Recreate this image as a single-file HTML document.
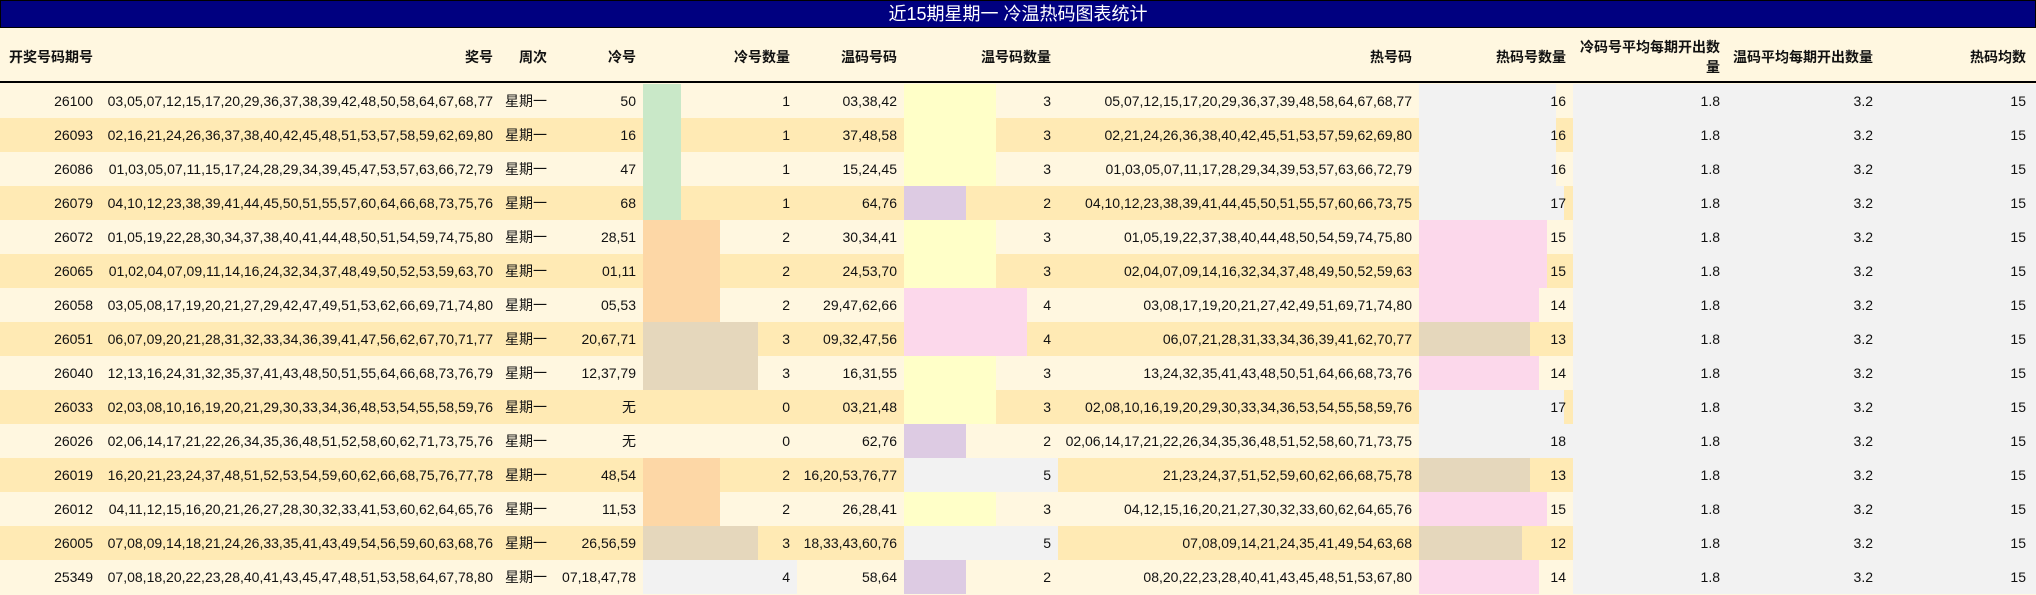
<!DOCTYPE html>
<html><head><meta charset="utf-8">
<style>
*{margin:0;padding:0;box-sizing:border-box}
body{width:2036px;height:595px;overflow:hidden;background:#fff7e0;font-family:"Liberation Sans","Noto Sans CJK SC",sans-serif;font-size:14px;color:#111}
.title{position:absolute;left:0;top:0;width:2036px;height:28px;background:#000080;border:1px solid #000;color:#fff;text-align:center;font-size:18px;line-height:26px}
.hdr{position:absolute;left:0;top:28px;width:2036px;height:55px;background:#fff7e0;border-bottom:2px solid #000;display:flex;font-weight:bold;font-size:14px}
.hdr div{height:53px;display:flex;align-items:center;justify-content:flex-end;text-align:right;padding-right:7px;padding-top:5px;line-height:20px}
.r{position:absolute;left:0;width:2036px;height:34px;display:flex}
.r.o{background:#fff7e0}.r.e{background:#ffeab4}
.r>div{height:34px;line-height:34px;text-align:right;padding-right:7px;position:relative;white-space:nowrap}
.r>div span{position:relative}
.g{background:#f2f2f2}
.b{position:absolute;left:0;top:0;height:34px}
.c1{width:100px}.c2{width:400px}.c3{width:54px}.c4{width:89px}.c5{width:154px}.c6{width:107px}.c7{width:154px}.c8{width:361px}.c9{width:154px}.c10{width:154px}.c11{width:153px}.c12{width:156px;padding-right:10px!important}
.gr{background:#c9e8c8}.or{background:#fdd7a6}.tn{background:#e5d7bc}.gy{background:#f2f2f2}.ye{background:#ffffc8}.lv{background:#ddcbe3}.pk{background:#fcd8eb}
</style></head><body>
<div class="title">近15期星期一 冷温热码图表统计</div>
<div class="hdr">
<div class="c1" style="justify-content:flex-start;padding-left:9px">开奖号码期号</div>
<div class="c2">奖号</div><div class="c3">周次</div><div class="c4">冷号</div><div class="c5">冷号数量</div><div class="c6">温码号码</div><div class="c7">温号码数量</div><div class="c8">热号码</div><div class="c9">热码号数量</div><div class="c10">冷码号平均每期开出数<br>量</div><div class="c11">温码平均每期开出数量</div><div class="c12">热码均数</div>
</div>

<div class="r o" style="top:84px"><div class="c1">26100</div><div class="c2">03,05,07,12,15,17,20,29,36,37,38,39,42,48,50,58,64,67,68,77</div><div class="c3">星期一</div><div class="c4">50</div><div class="c5"><i class="b gr" style="width:38px"></i><span>1</span></div><div class="c6">03,38,42</div><div class="c7"><i class="b ye" style="width:92px"></i><span>3</span></div><div class="c8">05,07,12,15,17,20,29,36,37,39,48,58,64,67,68,77</div><div class="c9"><i class="b gy" style="width:137px"></i><span>16</span></div><div class="c10 g">1.8</div><div class="c11 g">3.2</div><div class="c12 g">15</div></div>

<div class="r e" style="top:118px"><div class="c1">26093</div><div class="c2">02,16,21,24,26,36,37,38,40,42,45,48,51,53,57,58,59,62,69,80</div><div class="c3">星期一</div><div class="c4">16</div><div class="c5"><i class="b gr" style="width:38px"></i><span>1</span></div><div class="c6">37,48,58</div><div class="c7"><i class="b ye" style="width:92px"></i><span>3</span></div><div class="c8">02,21,24,26,36,38,40,42,45,51,53,57,59,62,69,80</div><div class="c9"><i class="b gy" style="width:137px"></i><span>16</span></div><div class="c10 g">1.8</div><div class="c11 g">3.2</div><div class="c12 g">15</div></div>

<div class="r o" style="top:152px"><div class="c1">26086</div><div class="c2">01,03,05,07,11,15,17,24,28,29,34,39,45,47,53,57,63,66,72,79</div><div class="c3">星期一</div><div class="c4">47</div><div class="c5"><i class="b gr" style="width:38px"></i><span>1</span></div><div class="c6">15,24,45</div><div class="c7"><i class="b ye" style="width:92px"></i><span>3</span></div><div class="c8">01,03,05,07,11,17,28,29,34,39,53,57,63,66,72,79</div><div class="c9"><i class="b gy" style="width:137px"></i><span>16</span></div><div class="c10 g">1.8</div><div class="c11 g">3.2</div><div class="c12 g">15</div></div>

<div class="r e" style="top:186px"><div class="c1">26079</div><div class="c2">04,10,12,23,38,39,41,44,45,50,51,55,57,60,64,66,68,73,75,76</div><div class="c3">星期一</div><div class="c4">68</div><div class="c5"><i class="b gr" style="width:38px"></i><span>1</span></div><div class="c6">64,76</div><div class="c7"><i class="b lv" style="width:62px"></i><span>2</span></div><div class="c8">04,10,12,23,38,39,41,44,45,50,51,55,57,60,66,73,75</div><div class="c9"><i class="b gy" style="width:145px"></i><span>17</span></div><div class="c10 g">1.8</div><div class="c11 g">3.2</div><div class="c12 g">15</div></div>

<div class="r o" style="top:220px"><div class="c1">26072</div><div class="c2">01,05,19,22,28,30,34,37,38,40,41,44,48,50,51,54,59,74,75,80</div><div class="c3">星期一</div><div class="c4">28,51</div><div class="c5"><i class="b or" style="width:77px"></i><span>2</span></div><div class="c6">30,34,41</div><div class="c7"><i class="b ye" style="width:92px"></i><span>3</span></div><div class="c8">01,05,19,22,37,38,40,44,48,50,54,59,74,75,80</div><div class="c9"><i class="b pk" style="width:128px"></i><span>15</span></div><div class="c10 g">1.8</div><div class="c11 g">3.2</div><div class="c12 g">15</div></div>

<div class="r e" style="top:254px"><div class="c1">26065</div><div class="c2">01,02,04,07,09,11,14,16,24,32,34,37,48,49,50,52,53,59,63,70</div><div class="c3">星期一</div><div class="c4">01,11</div><div class="c5"><i class="b or" style="width:77px"></i><span>2</span></div><div class="c6">24,53,70</div><div class="c7"><i class="b ye" style="width:92px"></i><span>3</span></div><div class="c8">02,04,07,09,14,16,32,34,37,48,49,50,52,59,63</div><div class="c9"><i class="b pk" style="width:128px"></i><span>15</span></div><div class="c10 g">1.8</div><div class="c11 g">3.2</div><div class="c12 g">15</div></div>

<div class="r o" style="top:288px"><div class="c1">26058</div><div class="c2">03,05,08,17,19,20,21,27,29,42,47,49,51,53,62,66,69,71,74,80</div><div class="c3">星期一</div><div class="c4">05,53</div><div class="c5"><i class="b or" style="width:77px"></i><span>2</span></div><div class="c6">29,47,62,66</div><div class="c7"><i class="b pk" style="width:123px"></i><span>4</span></div><div class="c8">03,08,17,19,20,21,27,42,49,51,69,71,74,80</div><div class="c9"><i class="b pk" style="width:120px"></i><span>14</span></div><div class="c10 g">1.8</div><div class="c11 g">3.2</div><div class="c12 g">15</div></div>

<div class="r e" style="top:322px"><div class="c1">26051</div><div class="c2">06,07,09,20,21,28,31,32,33,34,36,39,41,47,56,62,67,70,71,77</div><div class="c3">星期一</div><div class="c4">20,67,71</div><div class="c5"><i class="b tn" style="width:115px"></i><span>3</span></div><div class="c6">09,32,47,56</div><div class="c7"><i class="b pk" style="width:123px"></i><span>4</span></div><div class="c8">06,07,21,28,31,33,34,36,39,41,62,70,77</div><div class="c9"><i class="b tn" style="width:111px"></i><span>13</span></div><div class="c10 g">1.8</div><div class="c11 g">3.2</div><div class="c12 g">15</div></div>

<div class="r o" style="top:356px"><div class="c1">26040</div><div class="c2">12,13,16,24,31,32,35,37,41,43,48,50,51,55,64,66,68,73,76,79</div><div class="c3">星期一</div><div class="c4">12,37,79</div><div class="c5"><i class="b tn" style="width:115px"></i><span>3</span></div><div class="c6">16,31,55</div><div class="c7"><i class="b ye" style="width:92px"></i><span>3</span></div><div class="c8">13,24,32,35,41,43,48,50,51,64,66,68,73,76</div><div class="c9"><i class="b pk" style="width:120px"></i><span>14</span></div><div class="c10 g">1.8</div><div class="c11 g">3.2</div><div class="c12 g">15</div></div>

<div class="r e" style="top:390px"><div class="c1">26033</div><div class="c2">02,03,08,10,16,19,20,21,29,30,33,34,36,48,53,54,55,58,59,76</div><div class="c3">星期一</div><div class="c4">无</div><div class="c5"><span>0</span></div><div class="c6">03,21,48</div><div class="c7"><i class="b ye" style="width:92px"></i><span>3</span></div><div class="c8">02,08,10,16,19,20,29,30,33,34,36,53,54,55,58,59,76</div><div class="c9"><i class="b gy" style="width:145px"></i><span>17</span></div><div class="c10 g">1.8</div><div class="c11 g">3.2</div><div class="c12 g">15</div></div>

<div class="r o" style="top:424px"><div class="c1">26026</div><div class="c2">02,06,14,17,21,22,26,34,35,36,48,51,52,58,60,62,71,73,75,76</div><div class="c3">星期一</div><div class="c4">无</div><div class="c5"><span>0</span></div><div class="c6">62,76</div><div class="c7"><i class="b lv" style="width:62px"></i><span>2</span></div><div class="c8">02,06,14,17,21,22,26,34,35,36,48,51,52,58,60,71,73,75</div><div class="c9"><i class="b gy" style="width:154px"></i><span>18</span></div><div class="c10 g">1.8</div><div class="c11 g">3.2</div><div class="c12 g">15</div></div>

<div class="r e" style="top:458px"><div class="c1">26019</div><div class="c2">16,20,21,23,24,37,48,51,52,53,54,59,60,62,66,68,75,76,77,78</div><div class="c3">星期一</div><div class="c4">48,54</div><div class="c5"><i class="b or" style="width:77px"></i><span>2</span></div><div class="c6">16,20,53,76,77</div><div class="c7"><i class="b gy" style="width:154px"></i><span>5</span></div><div class="c8">21,23,24,37,51,52,59,60,62,66,68,75,78</div><div class="c9"><i class="b tn" style="width:111px"></i><span>13</span></div><div class="c10 g">1.8</div><div class="c11 g">3.2</div><div class="c12 g">15</div></div>

<div class="r o" style="top:492px"><div class="c1">26012</div><div class="c2">04,11,12,15,16,20,21,26,27,28,30,32,33,41,53,60,62,64,65,76</div><div class="c3">星期一</div><div class="c4">11,53</div><div class="c5"><i class="b or" style="width:77px"></i><span>2</span></div><div class="c6">26,28,41</div><div class="c7"><i class="b ye" style="width:92px"></i><span>3</span></div><div class="c8">04,12,15,16,20,21,27,30,32,33,60,62,64,65,76</div><div class="c9"><i class="b pk" style="width:128px"></i><span>15</span></div><div class="c10 g">1.8</div><div class="c11 g">3.2</div><div class="c12 g">15</div></div>

<div class="r e" style="top:526px"><div class="c1">26005</div><div class="c2">07,08,09,14,18,21,24,26,33,35,41,43,49,54,56,59,60,63,68,76</div><div class="c3">星期一</div><div class="c4">26,56,59</div><div class="c5"><i class="b tn" style="width:115px"></i><span>3</span></div><div class="c6">18,33,43,60,76</div><div class="c7"><i class="b gy" style="width:154px"></i><span>5</span></div><div class="c8">07,08,09,14,21,24,35,41,49,54,63,68</div><div class="c9"><i class="b tn" style="width:103px"></i><span>12</span></div><div class="c10 g">1.8</div><div class="c11 g">3.2</div><div class="c12 g">15</div></div>

<div class="r o" style="top:560px"><div class="c1">25349</div><div class="c2">07,08,18,20,22,23,28,40,41,43,45,47,48,51,53,58,64,67,78,80</div><div class="c3">星期一</div><div class="c4">07,18,47,78</div><div class="c5"><i class="b gy" style="width:154px"></i><span>4</span></div><div class="c6">58,64</div><div class="c7"><i class="b lv" style="width:62px"></i><span>2</span></div><div class="c8">08,20,22,23,28,40,41,43,45,48,51,53,67,80</div><div class="c9"><i class="b pk" style="width:120px"></i><span>14</span></div><div class="c10 g">1.8</div><div class="c11 g">3.2</div><div class="c12 g">15</div></div>
</body></html>
